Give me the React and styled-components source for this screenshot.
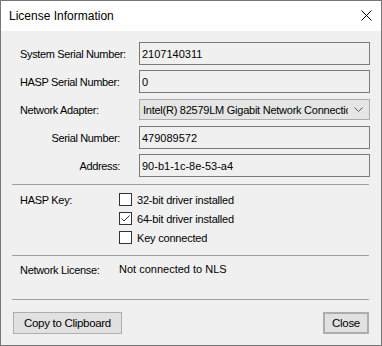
import React from "react";
import styled, { createGlobalStyle } from "styled-components";

const GlobalStyle = createGlobalStyle`
    html, body {
        margin: 0;
        padding: 0;
        background: #ffffff;
    }
    body {
        font-family: "Liberation Sans", Arial, sans-serif;
        font-size: 11px;
        color: #000;
    }
`;

const fields = [
    { label: "System Serial Number:", value: "2107140311" },
    { label: "HASP Serial Number:", value: "0" },
    { label: "Network Adapter:", value: "Intel(R) 82579LM Gigabit Network Connection", select: true },
    { label: "Serial Number:", value: "479089572", indent: true },
    { label: "Address:", value: "90-b1-1c-8e-53-a4", indent: true },
];

const keys = [
    { text: "32-bit driver installed", checked: false },
    { text: "64-bit driver installed", checked: true },
    { text: "Key connected", checked: false },
];

const App = () => {
    return (
        <>
            <GlobalStyle />
            <Window>
                <TitleBar>
                    <Title>License Information</Title>
                    <CloseX width="11" height="11" viewBox="0 0 11 11">
                        <path d="M0.5 0.5 L10.5 10.5 M10.5 0.5 L0.5 10.5" stroke="#000" strokeWidth="1" fill="none" />
                    </CloseX>
                </TitleBar>
                <Body>
                    <Form>
                        {fields.map((f, i) => (
                            <React.Fragment key={i}>
                                <Label $indent={f.indent}>{f.label}</Label>
                                {f.select ? (
                                    <Select>
                                        <SelectText>{f.value}</SelectText>
                                        <svg width="9" height="6" viewBox="0 0 9 6">
                                            <path d="M0.5 0.5 L4.5 4.5 L8.5 0.5" stroke="#555" strokeWidth="1" fill="none" />
                                        </svg>
                                    </Select>
                                ) : (
                                    <TextBox>{f.value}</TextBox>
                                )}
                            </React.Fragment>
                        ))}
                    </Form>
                    <Separator $top={7} />
                    <KeySection>
                        <KeyLabel>HASP Key:</KeyLabel>
                        <CheckList>
                            {keys.map((k, i) => (
                                <CheckRow key={i}>
                                    <Box>
                                        {k.checked && (
                                            <svg width="11" height="11" viewBox="0 0 11 11">
                                                <path d="M1.5 5.5 L4 8 L9.5 2.5" stroke="#333" strokeWidth="1" fill="none" />
                                            </svg>
                                        )}
                                    </Box>
                                    <CheckText>{k.text}</CheckText>
                                </CheckRow>
                            ))}
                        </CheckList>
                    </KeySection>
                    <Separator />
                    <NetSection>
                        <KeyLabel>Network License:</KeyLabel>
                        <span>Not connected to NLS</span>
                    </NetSection>
                    <Separator />
                    <ButtonRow>
                        <Button style={{ width: 109 }}>Copy to Clipboard</Button>
                        <Button $default style={{ width: 46 }}>Close</Button>
                    </ButtonRow>
                </Body>
            </Window>
        </>
    );
};

const Window = styled.div`
    width: 382px;
    height: 346px;
    box-sizing: border-box;
    border: 1px solid #767676;
    display: flex;
    flex-direction: column;
    background: #f0f0f0;
`;

const TitleBar = styled.div`
    height: 30px;
    background: #fff;
    display: flex;
    align-items: center;
    justify-content: space-between;
    padding: 0 9px 0 8px;
`;

const Title = styled.span`
    font-size: 12px;
    margin-top: -1px;
`;

const CloseX = styled.svg`
    margin-top: -1px;
`;

const Body = styled.div`
    flex: 1;
    display: flex;
    flex-direction: column;
`;

const Form = styled.div`
    display: grid;
    grid-template-columns: 119px 231px;
    grid-auto-rows: 23px;
    row-gap: 5px;
    padding: 11px 0 0 19px;
    align-items: center;
`;

const Label = styled.div`
    text-align: ${(p) => (p.$indent ? "right" : "left")};
    padding-right: ${(p) => (p.$indent ? "19px" : "0")};
    white-space: nowrap;
    letter-spacing: -0.35px;
`;

const TextBox = styled.div`
    height: 23px;
    box-sizing: border-box;
    border: 1px solid #7a7a7a;
    background: #f0f0f0;
    padding: 0 2px;
    display: flex;
    align-items: center;
`;

const Select = styled.div`
    height: 21px;
    box-sizing: border-box;
    border: 1px solid #acacac;
    background: #e5e5e5;
    padding: 0 6px 0 3px;
    display: flex;
    align-items: center;
    gap: 6px;
`;

const SelectText = styled.span`
    flex: 1;
    overflow: hidden;
    white-space: nowrap;
    letter-spacing: -0.25px;
`;

const Separator = styled.div`
    height: 1px;
    background: #a0a0a0;
    margin: ${(p) => p.$top || 0}px 12px 0 11px;
`;

const KeySection = styled.div`
    display: flex;
    padding: 5px 0 8px 19px;
`;

const KeyLabel = styled.div`
    width: 99px;
    height: 19px;
    display: flex;
    align-items: center;
    letter-spacing: -0.3px;
`;

const CheckList = styled.div`
    display: flex;
    flex-direction: column;
`;

const CheckRow = styled.div`
    height: 19px;
    display: flex;
    align-items: center;
    gap: 5px;
`;

const CheckText = styled.span`
    letter-spacing: -0.2px;
`;

const Box = styled.div`
    width: 13px;
    height: 13px;
    box-sizing: border-box;
    border: 1px solid #333;
    background: #fff;
    display: flex;
    align-items: center;
    justify-content: center;
`;

const NetSection = styled.div`
    height: 43px;
    display: flex;
    align-items: flex-start;
    padding: 4px 0 0 19px;
    box-sizing: border-box;
    span {
        line-height: 19px;
    }
`;

const ButtonRow = styled.div`
    display: flex;
    justify-content: space-between;
    padding: 12px 12px 0 12px;
`;

const Button = styled.div`
    height: 22px;
    box-sizing: border-box;
    border: ${(p) => (p.$default ? "2px solid #adadad" : "1px solid #adadad")};
    background: #e1e1e1;
    display: flex;
    align-items: center;
    justify-content: center;
    font-size: 11.5px;
    letter-spacing: -0.3px;
`;

export default App;
